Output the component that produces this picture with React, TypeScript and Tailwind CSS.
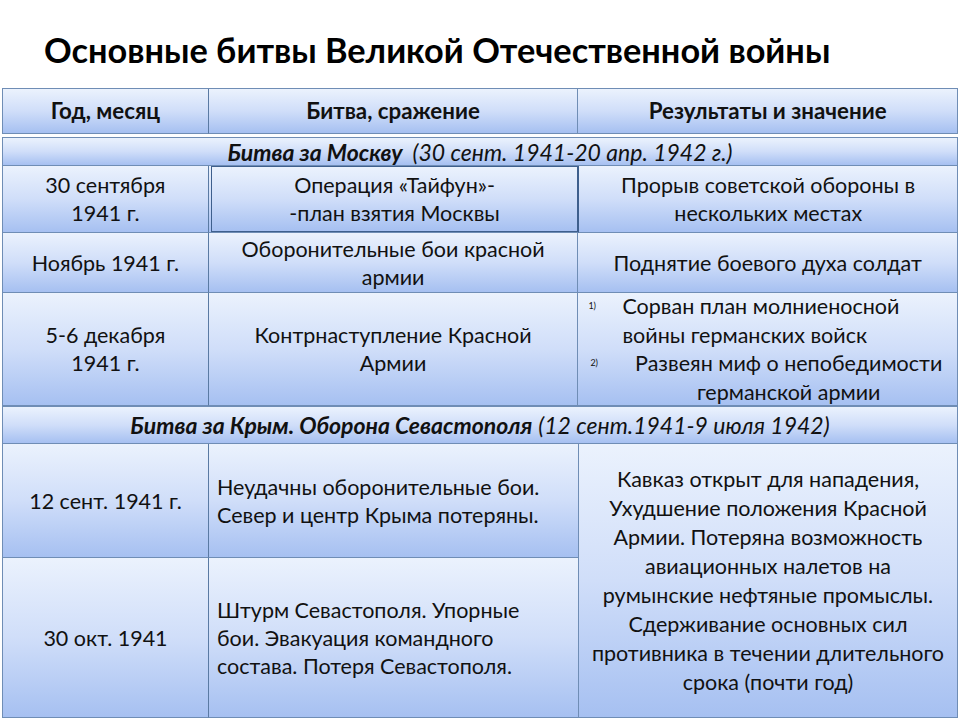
import type { ReactNode } from 'react';

const cellBg = 'bg-linear-to-b from-[#ebf2fd] via-[#d0def9] to-[#a6c0f1]';

type CellProps = { w: string; h: string; className?: string; children?: ReactNode };

const Cell = ({ w, h, className = '', children }: CellProps) => (
  <div className={`${w} ${h} ${cellBg} border-r border-b border-[#6f8db5] flex flex-col items-center justify-center text-center ${className}`}>
    {children}
  </div>
);

const Band = ({ h, children }: { h: string; children: ReactNode }) => (
  <div className={`w-full ${h} ${cellBg} border border-[#6f8db5] flex items-center justify-center italic text-[23px]`}>
    {children}
  </div>
);

export default function App() {
  return (
    <div className="w-[960px] h-[720px] bg-white text-[#111] font-['Lato','Open_Sans',sans-serif] overflow-hidden">
      <h1 className="pl-[44px] pt-[29px] h-[88px] text-[34.3px] leading-[42px] font-bold text-black">
        Основные битвы Великой Отечественной войны
      </h1>

      <div className="ml-[2px] w-[956px] flex flex-col text-[21.5px] leading-[28px]">
        {/* header */}
        <div className="flex border-l border-t border-[#6f8db5] text-[22.3px]">
          <Cell w="w-[206px]" h="h-[45px]" className="font-bold border-r-[#5a7aa3]">Год, месяц</Cell>
          <Cell w="w-[370px]" h="h-[45px]" className="font-bold">Битва, сражение</Cell>
          <Cell w="w-[380px]" h="h-[45px]" className="font-bold">Результаты и значение</Cell>
        </div>

        <div className="h-[3px]" />

        <Band h="h-[29px]">
          <span className="font-bold">Битва за Москву</span>
          <span className="ml-[10px]">(30 сент. 1941-20 апр. 1942 г.)</span>
        </Band>

        {/* row 1 */}
        <div className="flex border-l border-[#6f8db5]">
          <Cell w="w-[206px]" h="h-[67px]" className="border-r-[#5a7aa3]">
            <span>30 сентября</span>
            <span>1941 г.</span>
          </Cell>
          <div className={`w-[370px] h-[67px] ${cellBg} border-b border-[#6f8db5] flex pl-[2px]`}>
            <div className={`flex-1 ${cellBg} border border-[#3e5f8d] flex flex-col items-center justify-center text-center`}>
              <span>Операция «Тайфун»-</span>
              <span>-план взятия Москвы</span>
            </div>
          </div>
          <Cell w="w-[380px]" h="h-[67px]" className="border-l border-l-[#3e5f8d]">
            <span>Прорыв советской обороны в</span>
            <span>нескольких местах</span>
          </Cell>
        </div>

        {/* row 2 */}
        <div className="flex border-l border-[#6f8db5]">
          <Cell w="w-[206px]" h="h-[60px]" className="border-r-[#5a7aa3]">Ноябрь 1941 г.</Cell>
          <Cell w="w-[370px]" h="h-[60px]">
            <span>Оборонительные бои красной</span>
            <span>армии</span>
          </Cell>
          <Cell w="w-[380px]" h="h-[60px]">Поднятие боевого духа солдат</Cell>
        </div>

        {/* row 3 */}
        <div className="flex border-l border-[#6f8db5]">
          <Cell w="w-[206px]" h="h-[113px]" className="border-r-[#5a7aa3]">
            <span>5-6 декабря</span>
            <span>1941 г.</span>
          </Cell>
          <Cell w="w-[370px]" h="h-[113px]">
            <span>Контрнаступление Красной</span>
            <span>Армии</span>
          </Cell>
          <div className={`w-[380px] h-[113px] ${cellBg} border-r border-b border-[#6f8db5] flex flex-col justify-center leading-[28.5px]`}>
            <div className="flex">
              <span className="w-[44px] pl-[10px] text-[9px] leading-[28px]">1)</span>
              <div className="flex flex-col">
                <span>Сорван план молниеносной</span>
                <span>войны германских войск</span>
              </div>
            </div>
            <div className="flex">
              <span className="w-[44px] pl-[12px] text-[9px] leading-[28px]">2)</span>
              <div className="flex-1 flex flex-col items-center pr-[2px]">
                <span>Развеян миф о непобедимости</span>
                <span>германской армии</span>
              </div>
            </div>
          </div>
        </div>

        <Band h="h-[38px]">
          <span className="font-bold">Битва за Крым. Оборона Севастополя</span>
          <span className="ml-[6px]">(12 сент.1941-9 июля 1942)</span>
        </Band>

        {/* rows 4-5 */}
        <div className="flex border-l border-[#6f8db5]">
          <div className="flex flex-col">
            <div className="flex">
              <Cell w="w-[206px]" h="h-[114px]" className="border-r-[#5a7aa3]">12 сент. 1941 г.</Cell>
              <Cell w="w-[370px]" h="h-[114px]" className="!items-start text-left pl-[8px]">
                <span>Неудачны оборонительные бои.</span>
                <span>Север и центр Крыма потеряны.</span>
              </Cell>
            </div>
            <div className="flex">
              <Cell w="w-[206px]" h="h-[160px]" className="border-r-[#5a7aa3]">30 окт. 1941</Cell>
              <Cell w="w-[370px]" h="h-[160px]" className="!items-start text-left pl-[8px]">
                <span>Штурм Севастополя. Упорные</span>
                <span>бои. Эвакуация командного</span>
                <span>состава. Потеря Севастополя.</span>
              </Cell>
            </div>
          </div>
          <Cell w="w-[380px]" h="h-[274px]" className="leading-[29px]">
            <span>Кавказ открыт для нападения,</span>
            <span>Ухудшение положения Красной</span>
            <span>Армии. Потеряна возможность</span>
            <span>авиационных налетов на</span>
            <span>румынские нефтяные промыслы.</span>
            <span>Сдерживание основных сил</span>
            <span>противника в течении длительного</span>
            <span>срока (почти год)</span>
          </Cell>
        </div>
      </div>
    </div>
  );
}
